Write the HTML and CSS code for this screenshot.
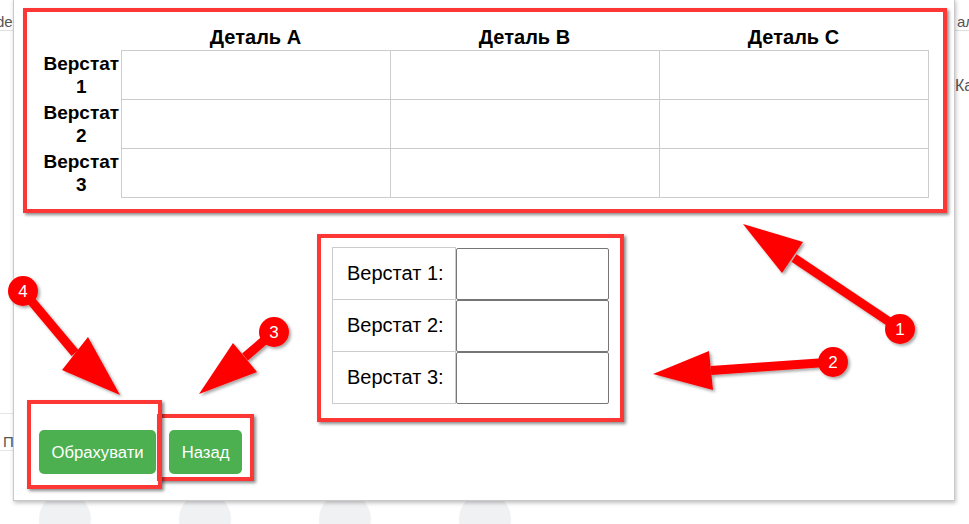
FILE: index.html
```html
<!DOCTYPE html>
<html lang="uk">
<head>
<meta charset="utf-8">
<title>Верстати</title>
<link rel="stylesheet" href="styles.css">
</head>
<body>
<div class="page">
  <header class="topbar"><span class="tb-left">de</span><span class="tb-right">ал</span></header>
  <div class="row2"><span>Ка</span></div>
  <div class="card-left">П</div>
  <div class="circles"><span class="dot"></span><span class="dot"></span><span class="dot"></span><span class="dot"></span></div>
</div>

<div class="modal">
  <div class="anno box1">
    <table class="grid">
      <colgroup><col class="c0"><col class="cd"><col class="cd"><col class="cd"></colgroup>
      <thead>
        <tr><th></th><th>Деталь А</th><th>Деталь В</th><th>Деталь С</th></tr>
      </thead>
      <tbody>
        <tr><th class="rowh">Верстат 1</th><td></td><td></td><td></td></tr>
        <tr><th class="rowh">Верстат 2</th><td></td><td></td><td></td></tr>
        <tr><th class="rowh">Верстат 3</th><td></td><td></td><td></td></tr>
      </tbody>
    </table>
  </div>

  <div class="anno box2">
    <table class="inputs">
      <tr><td class="lbl">Верстат 1:</td><td class="fld"><input type="text"></td></tr>
      <tr><td class="lbl">Верстат 2:</td><td class="fld"><input type="text"></td></tr>
      <tr><td class="lbl">Верстат 3:</td><td class="fld"><input type="text"></td></tr>
    </table>
  </div>

  <div class="actions">
    <button class="btn">Обрахувати</button>
    <button class="btn">Назад</button>
  </div>
</div>

<div class="anno mark box3"></div>
<div class="anno mark box4"></div>

<svg class="overlay" width="969" height="524" viewBox="0 0 969 524">
  <defs>
    <filter id="sh" x="-30%" y="-30%" width="160%" height="160%">
      <feDropShadow dx="2" dy="2" stdDeviation="1.5" flood-color="#000" flood-opacity="0.35"/>
    </filter>
  </defs>
  <g filter="url(#sh)" fill="#ff0000">
    <line x1="900" y1="329" x2="794" y2="258" stroke="#ff0000" stroke-width="9"/>
    <polygon points="743,224 803,242 782,273"/>
    <circle cx="900" cy="329" r="15"/>

    <line x1="833" y1="362" x2="711" y2="370.5" stroke="#ff0000" stroke-width="9"/>
    <polygon points="653,374 709,351 713,390"/>
    <circle cx="833" cy="362" r="15"/>

    <line x1="274" y1="332" x2="245" y2="357" stroke="#ff0000" stroke-width="9"/>
    <polygon points="199,394 233,343 257,372"/>
    <circle cx="274" cy="332" r="15"/>

    <line x1="23" y1="291" x2="75" y2="353" stroke="#ff0000" stroke-width="9"/>
    <polygon points="120,395 88,337 62,370"/>
    <circle cx="23" cy="291" r="15"/>
  </g>
  <g class="nums">
    <text x="900" y="335">1</text>
    <text x="833" y="368">2</text>
    <text x="274" y="338">3</text>
    <text x="23" y="297">4</text>
  </g>
</svg>
</body>
</html>
```

FILE: styles.css
```css
html, body {
  margin: 0;
  padding: 0;
}

body {
  width: 969px;
  height: 524px;
  overflow: hidden;
  position: relative;
  background: #fff;
  font-family: "Liberation Sans", Arial, sans-serif;
  color: #000;
}

/* underlying page */
.page {
  display: flex;
  flex-direction: column;
  height: 524px;
}

.topbar {
  height: 43px;
  box-sizing: border-box;
  border-bottom: 1px solid #e0e0e0;
  display: flex;
  justify-content: space-between;
  align-items: flex-start;
  padding-top: 13px;
  font-size: 15px;
  line-height: 17px;
  color: #555;
}

.tb-left {
  margin-left: -4px;
}

.tb-right {
  margin-right: -5px;
}

.row2 {
  display: flex;
  margin-top: 46px;
  padding-left: 955px;
  font-size: 16px;
  line-height: 18px;
  color: #555;
  white-space: nowrap;
}

.card-left {
  margin-top: 318px;
  width: 40px;
  height: 54px;
  box-sizing: border-box;
  border: 1px solid #e6e6e6;
  border-left: none;
  padding: 19px 0 0 3px;
  font-size: 15px;
  line-height: 17px;
  color: #555;
}

.circles {
  display: flex;
  gap: 88px;
  margin-top: 42px;
  padding-left: 39px;
}

.dot {
  width: 52px;
  height: 52px;
  border-radius: 50%;
  background: #f0f1f3;
  flex: none;
}

/* modal */
.modal {
  position: absolute;
  left: 13px;
  top: -1px;
  width: 942px;
  height: 502px;
  box-sizing: border-box;
  border: 1px solid #c9c9c9;
  background: #fff;
  box-shadow: 1px 2px 4px rgba(0, 0, 0, 0.25);
  padding: 8px 0 0 9px;
  z-index: 1;
}

.anno {
  border: 4px solid #fd3636;
  box-shadow: 2px 2px 3px rgba(0, 0, 0, 0.45);
  box-sizing: border-box;
}

.box1 {
  width: 924px;
  padding: 12px 15px 11px;
}

.grid {
  border-collapse: collapse;
  table-layout: fixed;
  width: 886px;
  font-size: 20px;
}

.grid .c0 {
  width: 79px;
}

.grid .cd {
  width: 269px;
}

.grid th {
  font-weight: bold;
  line-height: 23px;
  padding: 2px 1px 1px;
  text-align: center;
}

.grid th.rowh {
  font-size: 19px;
  padding: 1px 0 2px;
}

.grid td {
  border: 1px solid #cccccc;
  padding: 1px;
}

.box2 {
  width: 307px;
  margin: 21px 0 0 294px;
  padding: 9px 11px 14px;
}

.inputs {
  border-collapse: collapse;
  font-size: 20px;
}

.inputs td.lbl {
  border: 1px solid #cccccc;
  padding: 14px 11px 14px 14px;
  line-height: 23px;
  white-space: nowrap;
}

.inputs td.fld {
  padding: 0;
}

.inputs input {
  display: block;
  width: 153px;
  height: 52px;
  box-sizing: border-box;
  border: 1px solid #767676;
  border-radius: 2px;
  margin: 0;
  padding: 0;
  background: #fff;
}

.actions {
  display: flex;
  gap: 13px;
  margin: 8px 0 0 16px;
}

.btn {
  background: #4caf50;
  color: #fff;
  border: 0;
  border-radius: 5px;
  font-family: "Liberation Sans", Arial, sans-serif;
  font-size: 16.67px;
  line-height: 19px;
  padding: 12.5px 12.5px;
}

/* annotations */
.mark {
  position: absolute;
  z-index: 2;
}

.box3 {
  left: 157px;
  top: 414px;
  width: 97px;
  height: 67px;
}

.box4 {
  left: 27px;
  top: 400px;
  width: 135px;
  height: 89px;
}

.overlay {
  position: absolute;
  left: 0;
  top: 0;
  z-index: 3;
  pointer-events: none;
}

.nums text {
  fill: #fff;
  font-family: "Liberation Sans", Arial, sans-serif;
  font-size: 17px;
  text-anchor: middle;
}
```
